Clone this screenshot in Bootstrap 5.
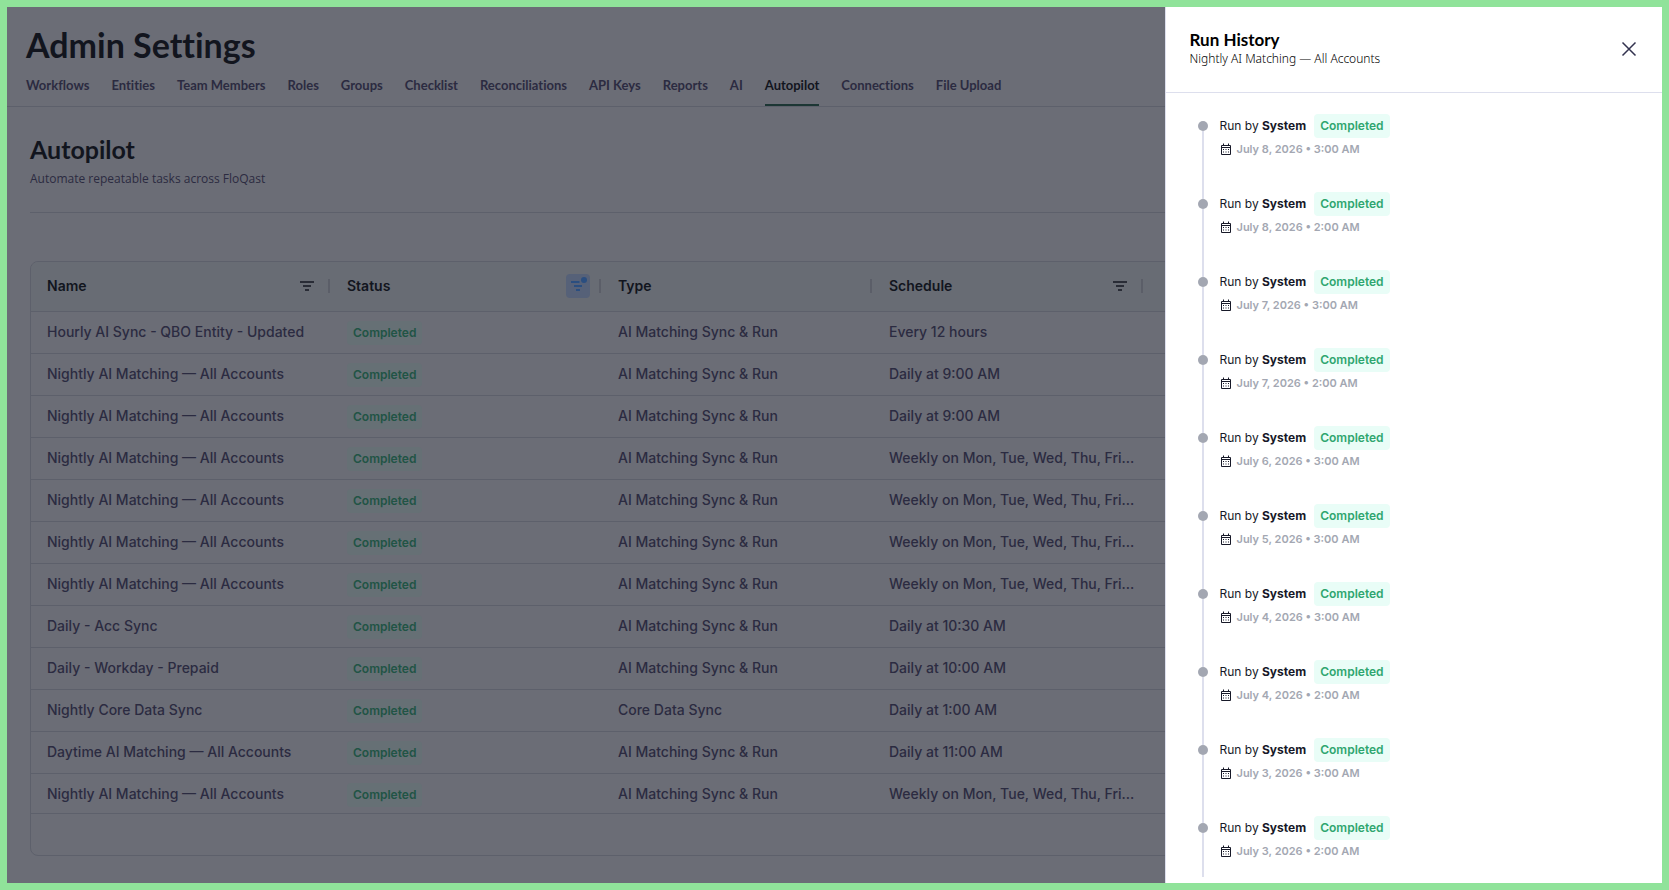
<!DOCTYPE html>
<html lang="en">
<head>
<meta charset="utf-8">
<meta name="viewport" content="width=device-width, initial-scale=1">
<title>Admin Settings - Autopilot</title>
<link href="https://cdn.jsdelivr.net/npm/bootstrap@5.3.0/dist/css/bootstrap.min.css" rel="stylesheet">
<style>
  :root {
    --dim-bg: #6b6d76;
    --dim-head: #686c74;
    --dim-line: #5d606b;
    --dim-ink: #12151e;
    --dim-text: #2b2b41;
    --line: #dddfed;
  }
  body { font-family: Inter, "Liberation Sans", sans-serif; background: #90e39a; }
  .frame { height: 100vh; padding: 7px; }
  .stage { background: var(--dim-bg); color: var(--dim-text); height: 100%; }
  .brand-font { font-family: Lato, "Open Sans", sans-serif; font-variant-ligatures: none; }

  .page-title { font-size: 34px; line-height: 40px; font-weight: 700; color: var(--dim-ink); padding: 18px 19px 0; }
  .tabs { gap: 22px; padding: 0 19px; margin-top: 11px; border-bottom: 1px solid var(--dim-line); }
  .tabs .nav-link { padding: 0 0 10px; font-size: 13px; line-height: 18px; font-weight: 700; color: var(--dim-text); border-bottom: 2px solid transparent; white-space: nowrap; }
  .tabs .nav-link.active { color: var(--dim-ink); border-bottom-color: #1c3634; }

  .content { padding: 26px 23px 0; }
  .section-title { font-size: 25px; line-height: 32px; font-weight: 700; color: var(--dim-ink); }
  .section-note { font-family: "Open Sans", sans-serif; font-size: 12px; line-height: 18px; margin-top: 5px; padding-bottom: 24px; border-bottom: 1px solid var(--dim-line); }

  .grid-card { margin-top: 48px; border: 1px solid var(--dim-line); border-radius: 8px; overflow: hidden; }
  .grid { table-layout: fixed; width: 100%; font-size: 14px; font-weight: 500; line-height: 20px; }
  .grid th { height: 49px; padding: 0; background: var(--dim-head); color: var(--dim-ink); font-weight: 600; border-bottom: 1px solid var(--dim-line); }
  .grid td { height: 42px; padding: 0 0 0 16px; white-space: nowrap; border-bottom: 1px solid var(--dim-line); }
  .grid tr:last-child td { height: 40px; padding-top: 2px; }
  .c-name { width: 300px; }
  .c-std { width: 271px; }
  .head-cell { height: 24px; padding-left: 16px; border: 0; }
  .head-cell::after { content: ""; width: 2px; height: 14px; margin: 0 1px 0 9px; background: #5b5e68; }
  .filter-btn { width: 24px; height: 24px; padding: 0; border: 0; border-radius: 4px; background: transparent; color: #292c36; }
  .filter-btn.on { background: #566178; color: #2a4e80; }
  .filter-btn svg { display: block; }
  .pill { display: inline-block; font-size: 12px; line-height: 24px; font-weight: 600; padding: 0 6px; border-radius: 4px; background: #e9fdf7; color: #2fa66f; }
  .grid .pill { background: #667075; color: #215445; vertical-align: middle; margin-top: 2px; }
  .grid-foot { height: 41px; }

  .drawer { top: 0; right: 0; bottom: 0; width: calc(30% + 1px); background: #fff; border-left: 1px solid var(--line); color: #171928; }
  .drawer-head { padding: 22px 21px 0 24px; height: 86px; border-bottom: 1px solid var(--line); color: #000; }
  .drawer-title { font-size: 17px; line-height: 21px; font-weight: 700; }
  .drawer-sub { font-family: "Noto Sans", sans-serif; font-weight: 300; font-size: 12px; line-height: 18px; }
  .close-btn { width: 24px; height: 24px; margin-top: 8px; padding: 0; border: 0; background: none; color: #33334f; }
  .close-btn svg { display: block; }
  .runs { margin: 0 0 6px; padding: 21px 24px 0 32px; min-height: 0; overflow: hidden; }
  .run { display: flex; gap: 12px; height: 78px; flex-shrink: 0; }
  .rail { width: 10px; flex: none; display: flex; flex-direction: column; align-items: center; margin-top: 7px; }
  .rail::before { content: ""; width: 10px; height: 10px; flex: none; border-radius: 50%; background: #a3a7b2; }
  .rail::after { content: ""; width: 2px; flex: none; height: 68px; background: var(--line); }
  .run-line { font-size: 12px; line-height: 24px; gap: 8px; }
  .run-date { font-size: 11px; line-height: 16px; font-weight: 600; color: #a3a7b2; gap: 5px; margin-top: 3px; }
  .run-date svg { color: #171928; }
</style>
</head>
<body>
<svg width="0" height="0" class="position-absolute" aria-hidden="true">
  <symbol id="i-filter" viewBox="0 0 24 24"><path d="M5 8h14M8 12h8M10 16h4" fill="none" stroke="currentColor" stroke-width="2"/></symbol>
  <symbol id="i-cal" viewBox="0 0 12 12"><path d="M1.500 2.500h9v9h-9zM1.500 4.500h9M3.500 .5v2M8.500 .5v2" fill="none" stroke="currentColor"/><path d="M3 6h1v1H3zM5.500 6h1v1h-1zM8 6h1v1H8zM3 8.500h1v1H3zM5.500 8.500h1v1h-1zM8 8.500h1v1H8z" fill="currentColor"/></symbol>
</svg>

<div class="frame">
<div class="stage position-relative overflow-hidden">
  <header class="brand-font">
    <h1 class="page-title m-0">Admin Settings</h1>
    <nav class="nav tabs flex-nowrap">
      <a class="nav-link" href="#">Workflows</a>
      <a class="nav-link" href="#">Entities</a>
      <a class="nav-link" href="#">Team Members</a>
      <a class="nav-link" href="#">Roles</a>
      <a class="nav-link" href="#">Groups</a>
      <a class="nav-link" href="#">Checklist</a>
      <a class="nav-link" href="#">Reconciliations</a>
      <a class="nav-link" href="#">API Keys</a>
      <a class="nav-link" href="#">Reports</a>
      <a class="nav-link" href="#">AI</a>
      <a class="nav-link active" href="#" aria-current="page">Autopilot</a>
      <a class="nav-link" href="#">Connections</a>
      <a class="nav-link" href="#">File Upload</a>
    </nav>
  </header>

  <main class="content">
    <h2 class="section-title brand-font m-0">Autopilot</h2>
    <p class="section-note mb-0">Automate repeatable tasks across FloQast</p>

    <div class="grid-card">
      <table class="grid">
        <colgroup><col class="c-name"><col class="c-std"><col class="c-std"><col class="c-std"><col></colgroup>
        <thead>
          <tr>
            <th scope="col"><div class="head-cell d-flex align-items-center"><span class="me-auto">Name</span><button class="filter-btn" type="button" aria-label="Filter name"><svg width="24" height="24"><use href="#i-filter"/></svg></button></div></th>
            <th scope="col"><div class="head-cell d-flex align-items-center"><span class="me-auto">Status</span><button class="filter-btn on" type="button" aria-label="Filter status"><svg width="24" height="24" viewBox="0 0 24 24"><path d="M5 8h8.500M8 12h8M10 16h4" fill="none" stroke="currentColor" stroke-width="2"/><circle cx="18" cy="6" r="3" fill="currentColor"/></svg></button></div></th>
            <th scope="col"><div class="head-cell d-flex align-items-center"><span class="me-auto">Type</span></div></th>
            <th scope="col"><div class="head-cell d-flex align-items-center"><span class="me-auto">Schedule</span><button class="filter-btn" type="button" aria-label="Filter schedule"><svg width="24" height="24"><use href="#i-filter"/></svg></button></div></th>
            <th></th>
          </tr>
        </thead>
        <tbody>
          <tr><td>Hourly AI Sync - QBO Entity - Updated</td><td><span class="pill">Completed</span></td><td>AI Matching Sync &amp; Run</td><td>Every 12 hours</td><td></td></tr>
          <tr><td>Nightly AI Matching — All Accounts</td><td><span class="pill">Completed</span></td><td>AI Matching Sync &amp; Run</td><td>Daily at 9:00 AM</td><td></td></tr>
          <tr><td>Nightly AI Matching — All Accounts</td><td><span class="pill">Completed</span></td><td>AI Matching Sync &amp; Run</td><td>Daily at 9:00 AM</td><td></td></tr>
          <tr><td>Nightly AI Matching — All Accounts</td><td><span class="pill">Completed</span></td><td>AI Matching Sync &amp; Run</td><td>Weekly on Mon, Tue, Wed, Thu, Fri…</td><td></td></tr>
          <tr><td>Nightly AI Matching — All Accounts</td><td><span class="pill">Completed</span></td><td>AI Matching Sync &amp; Run</td><td>Weekly on Mon, Tue, Wed, Thu, Fri…</td><td></td></tr>
          <tr><td>Nightly AI Matching — All Accounts</td><td><span class="pill">Completed</span></td><td>AI Matching Sync &amp; Run</td><td>Weekly on Mon, Tue, Wed, Thu, Fri…</td><td></td></tr>
          <tr><td>Nightly AI Matching — All Accounts</td><td><span class="pill">Completed</span></td><td>AI Matching Sync &amp; Run</td><td>Weekly on Mon, Tue, Wed, Thu, Fri…</td><td></td></tr>
          <tr><td>Daily - Acc Sync</td><td><span class="pill">Completed</span></td><td>AI Matching Sync &amp; Run</td><td>Daily at 10:30 AM</td><td></td></tr>
          <tr><td>Daily - Workday - Prepaid</td><td><span class="pill">Completed</span></td><td>AI Matching Sync &amp; Run</td><td>Daily at 10:00 AM</td><td></td></tr>
          <tr><td>Nightly Core Data Sync</td><td><span class="pill">Completed</span></td><td>Core Data Sync</td><td>Daily at 1:00 AM</td><td></td></tr>
          <tr><td>Daytime AI Matching — All Accounts</td><td><span class="pill">Completed</span></td><td>AI Matching Sync &amp; Run</td><td>Daily at 11:00 AM</td><td></td></tr>
          <tr><td>Nightly AI Matching — All Accounts</td><td><span class="pill">Completed</span></td><td>AI Matching Sync &amp; Run</td><td>Weekly on Mon, Tue, Wed, Thu, Fri…</td><td></td></tr>
        </tbody>
      </table>
      <div class="grid-foot"></div>
    </div>
  </main>

  <aside class="drawer position-absolute d-flex flex-column" aria-labelledby="drawerTitle">
    <div class="drawer-head d-flex justify-content-between align-items-start flex-shrink-0">
      <div>
        <h2 class="drawer-title brand-font m-0" id="drawerTitle">Run History</h2>
        <p class="drawer-sub m-0">Nightly AI Matching — All Accounts</p>
      </div>
      <button class="close-btn" type="button" aria-label="Close"><svg width="24" height="24"><path d="M5.500 5.500l13 13M18.500 5.500l-13 13" fill="none" stroke="currentColor" stroke-width="1.500"/></svg></button>
    </div>
    <ul class="runs list-unstyled d-flex flex-column flex-grow-1">
      <li class="run"><span class="rail"></span><div><div class="run-line d-flex"><span>Run by <b>System</b></span><span class="pill">Completed</span></div><div class="run-date d-flex align-items-center"><svg width="12" height="12"><use href="#i-cal"/></svg>July 8, 2026 • 3:00 AM</div></div></li>
      <li class="run"><span class="rail"></span><div><div class="run-line d-flex"><span>Run by <b>System</b></span><span class="pill">Completed</span></div><div class="run-date d-flex align-items-center"><svg width="12" height="12"><use href="#i-cal"/></svg>July 8, 2026 • 2:00 AM</div></div></li>
      <li class="run"><span class="rail"></span><div><div class="run-line d-flex"><span>Run by <b>System</b></span><span class="pill">Completed</span></div><div class="run-date d-flex align-items-center"><svg width="12" height="12"><use href="#i-cal"/></svg>July 7, 2026 • 3:00 AM</div></div></li>
      <li class="run"><span class="rail"></span><div><div class="run-line d-flex"><span>Run by <b>System</b></span><span class="pill">Completed</span></div><div class="run-date d-flex align-items-center"><svg width="12" height="12"><use href="#i-cal"/></svg>July 7, 2026 • 2:00 AM</div></div></li>
      <li class="run"><span class="rail"></span><div><div class="run-line d-flex"><span>Run by <b>System</b></span><span class="pill">Completed</span></div><div class="run-date d-flex align-items-center"><svg width="12" height="12"><use href="#i-cal"/></svg>July 6, 2026 • 3:00 AM</div></div></li>
      <li class="run"><span class="rail"></span><div><div class="run-line d-flex"><span>Run by <b>System</b></span><span class="pill">Completed</span></div><div class="run-date d-flex align-items-center"><svg width="12" height="12"><use href="#i-cal"/></svg>July 5, 2026 • 3:00 AM</div></div></li>
      <li class="run"><span class="rail"></span><div><div class="run-line d-flex"><span>Run by <b>System</b></span><span class="pill">Completed</span></div><div class="run-date d-flex align-items-center"><svg width="12" height="12"><use href="#i-cal"/></svg>July 4, 2026 • 3:00 AM</div></div></li>
      <li class="run"><span class="rail"></span><div><div class="run-line d-flex"><span>Run by <b>System</b></span><span class="pill">Completed</span></div><div class="run-date d-flex align-items-center"><svg width="12" height="12"><use href="#i-cal"/></svg>July 4, 2026 • 2:00 AM</div></div></li>
      <li class="run"><span class="rail"></span><div><div class="run-line d-flex"><span>Run by <b>System</b></span><span class="pill">Completed</span></div><div class="run-date d-flex align-items-center"><svg width="12" height="12"><use href="#i-cal"/></svg>July 3, 2026 • 3:00 AM</div></div></li>
      <li class="run"><span class="rail"></span><div><div class="run-line d-flex"><span>Run by <b>System</b></span><span class="pill">Completed</span></div><div class="run-date d-flex align-items-center"><svg width="12" height="12"><use href="#i-cal"/></svg>July 3, 2026 • 2:00 AM</div></div></li>
    </ul>
  </aside>
</div>
</div>
<script src="https://cdn.jsdelivr.net/npm/bootstrap@5.3.0/dist/js/bootstrap.bundle.min.js"></script>
</body>
</html>
